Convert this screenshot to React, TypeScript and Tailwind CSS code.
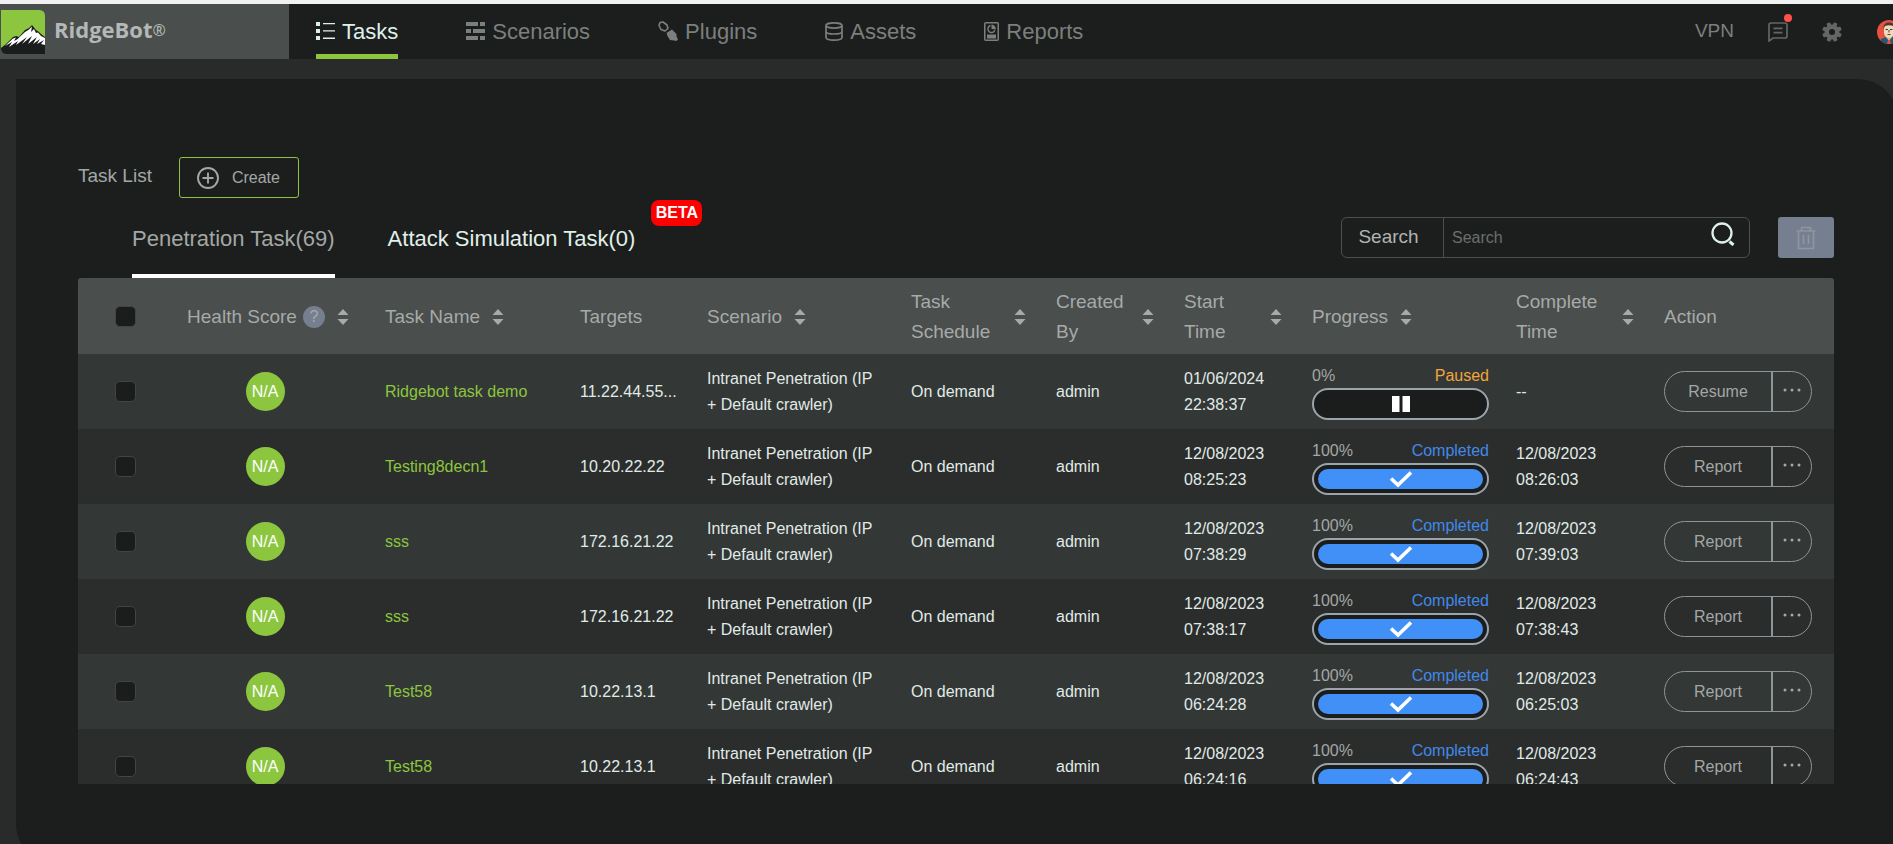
import React from "react";

type Task = {
  name: string;
  target: string;
  start: [string, string];
  end: [string, string] | null;
  paused?: boolean;
};

const tasks: Task[] = [
  { name: "Ridgebot task demo", target: "11.22.44.55...", start: ["01/06/2024", "22:38:37"], end: null, paused: true },
  { name: "Testing8decn1", target: "10.20.22.22", start: ["12/08/2023", "08:25:23"], end: ["12/08/2023", "08:26:03"] },
  { name: "sss", target: "172.16.21.22", start: ["12/08/2023", "07:38:29"], end: ["12/08/2023", "07:39:03"] },
  { name: "sss", target: "172.16.21.22", start: ["12/08/2023", "07:38:17"], end: ["12/08/2023", "07:38:43"] },
  { name: "Test58", target: "10.22.13.1", start: ["12/08/2023", "06:24:28"], end: ["12/08/2023", "06:25:03"] },
  { name: "Test58", target: "10.22.13.1", start: ["12/08/2023", "06:24:16"], end: ["12/08/2023", "06:24:43"] },
];

function Logo() {
  return (
    <svg viewBox="0 0 44 44" className="size-11 shrink-0" aria-hidden="true">
      <path d="M0 0H38Q44 0 44 6V44H5Q0 44 0 39Z" fill="#8cc63f" />
      <path d="M0 38L5 34L12 27L15 26L18 27L24 20L28 18L31 15L35 20L38 22L40 24L44 27V44H5Q0 44 0 39Z" fill="#1b1d1c" />
      <path d="M4 36L12 28.500L15 27.500L13 31L16 29.500L24 22L28 19.500L31 16.500L30 22L33 19L35 23L37 22.500L40 26L44 28V35L40 34L43 30L36 34L39 29L32 34L36 27L27 34L31 26L21 34L26 27L15 35L17 31L8 37L11 32Z" fill="#fff" />
    </svg>
  );
}

function TasksIcon() {
  return (
    <svg viewBox="0 0 19 18" className="h-[18px] w-[19px]" aria-hidden="true">
      <path d="M0 0h4v4H0zM0 7h4v4H0zM0 14h4v4H0zM7 1h12v1.300H7zM7 8.300h12v1.300H7zM7 15.600h12v1.300H7z" fill="currentColor" />
    </svg>
  );
}

function ScenariosIcon() {
  return (
    <svg viewBox="0 0 19 18" className="h-[18px] w-[19px]" aria-hidden="true">
      <path d="M0 0h12v4H0zM14 0h5v4h-5zM0 7h5v4H0zM7 7h12v4H7zM0 14h12v4H0zM14 14h5v4h-5z" fill="currentColor" />
    </svg>
  );
}

function PluginsIcon() {
  return (
    <svg viewBox="0 0 20 20" className="size-5" aria-hidden="true">
      <path d="M2 1.500L5 1L9 4L10 7.500L7 10L3 8.500L1 4.500Z" fill="none" stroke="currentColor" strokeWidth="1.600" strokeLinejoin="round" />
      <path d="M8.500 12L14 8.500L18.500 13V15.500L20 18.500L18.500 20L16 19.500L12 19L9.500 15Z" fill="currentColor" />
    </svg>
  );
}

function AssetsIcon() {
  return (
    <svg viewBox="0 0 18 19" className="h-[19px] w-[18px]" fill="none" stroke="currentColor" strokeWidth="1.700" aria-hidden="true">
      <ellipse cx="9" cy="3.500" rx="8" ry="2.600" />
      <path d="M1 3.500V15.500C1 17 4.500 18.100 9 18.100S17 17 17 15.500V3.500M1 9.500C1 11 4.500 12 9 12S17 11 17 9.500" />
    </svg>
  );
}

function ReportsIcon() {
  return (
    <svg viewBox="0 0 15 19" className="h-[19px] w-[15px]" aria-hidden="true">
      <rect x="0.750" y="0.750" width="13.500" height="17.500" rx="1" fill="none" stroke="currentColor" strokeWidth="1.500" />
      <path d="M6.500 3.500A3.600 3.600 0 1 0 10.900 8.200" fill="none" stroke="currentColor" strokeWidth="1.400" />
      <path d="M7.500 2.500A4.500 4.500 0 0 1 11.800 7.500L7.500 7ZM3 12.500h9V16.500H3z" fill="currentColor" />
    </svg>
  );
}

const navItems = [
  { label: "Tasks", icon: <TasksIcon />, active: true },
  { label: "Scenarios", icon: <ScenariosIcon /> },
  { label: "Plugins", icon: <PluginsIcon /> },
  { label: "Assets", icon: <AssetsIcon /> },
  { label: "Reports", icon: <ReportsIcon /> },
];

function Avatar() {
  return (
    <svg viewBox="0 0 24 24" className="size-6" aria-hidden="true">
      <clipPath id="avatar-clip">
        <circle cx="12" cy="12" r="12" />
      </clipPath>
      <g clipPath="url(#avatar-clip)">
        <rect width="24" height="24" fill="#e8513f" />
        <path d="M2 24L4 19L9 17H15L20 19L22 24Z" fill="#235a70" />
        <path d="M9 17L12 21L15 17V14H9Z" fill="#d9b596" />
        <path d="M11 20h2l1 4h-4z" fill="#e8513f" />
        <path d="M7 7Q7 3 12 3T17 7V13Q16 18 12 18T7 13Z" fill="#efd9bb" />
        <path d="M6.500 9Q6 2.500 12 2.500T17.500 9L16 6Q12 4.500 8 6Z" fill="#4a3a34" />
        <path d="M8.500 9.500h2.500M13 9.500h2.500M10.500 14.500h3M12 10v2.500" stroke="#4a3a34" />
      </g>
    </svg>
  );
}

function Header() {
  return (
    <header className="flex h-[59px] items-stretch border-t-4 border-[#f0f1f0] bg-[#1c1e1d]">
      <div className="flex w-[289px] shrink-0 items-center gap-[9px] bg-[#4a4e4c] pl-px">
        <Logo />
        <span className="flex items-center pb-1 font-['Open_Sans',sans-serif] text-[22px] font-bold text-[#b4b8b6]">
          RidgeBot<span className="font-['Noto_Sans',sans-serif] text-base font-normal">®</span>
        </span>
      </div>
      <nav className="flex gap-[68px] pl-[27px]">
        {navItems.map((item) => (
          <a
            key={item.label}
            href="#"
            className={
              item.active
                ? "flex items-center gap-[7px] border-b-[5px] border-[#8cc63f] pt-1 text-[22px] text-[#dff0ea]"
                : "flex items-center gap-[7px] border-b-[5px] border-transparent pt-1 text-[22px] text-[#7b7f7d]"
            }
          >
            {item.icon}
            {item.label}
          </a>
        ))}
      </nav>
      <div className="-mr-2 ml-auto flex items-center text-[#7b7f7d]">
        <a href="#" className="mr-[34px] text-[19px]">VPN</a>
        <button type="button" aria-label="Messages" className="relative mr-[34px]">
          <svg viewBox="0 0 20 20" className="size-5" fill="none" stroke="#636665" strokeWidth="1.700" aria-hidden="true">
            <path d="M3 1h14q2 0 2 2v11q0 2-2 2H5L1 19V3Q1 1 3 1ZM5.500 6.300h9M5.500 10.700h9" />
          </svg>
          <span className="absolute -right-1 -top-2 size-2 rounded-full bg-[#ff5148]" />
        </button>
        <button type="button" aria-label="Settings" className="mr-[35px]">
          <svg viewBox="0 0 20 20" className="size-5" aria-hidden="true">
            <g fill="#636665">
              <path fillRule="evenodd" d="M10 2.500a7.500 7.500 0 1 0 0 15a7.500 7.500 0 1 0 0-15ZM10 7a3 3 0 1 1 0 6a3 3 0 1 1 0-6Z" />
              {[22, 67, 112, 157, 202, 247, 292, 337].map((angle) => (
                <rect key={angle} x="8" y="0.200" width="4" height="4" rx="1" transform={`rotate(${angle} 10 10)`} />
              ))}
            </g>
          </svg>
        </button>
        <button type="button" aria-label="Account">
          <Avatar />
        </button>
      </div>
    </header>
  );
}

function SortIcon() {
  return (
    <svg viewBox="0 0 12 16" className="h-4 w-3 shrink-0" fill="#a6aaa8" aria-hidden="true">
      <path d="M6 0L11.500 6H.5ZM6 16L.5 10H11.500Z" />
    </svg>
  );
}

function Tick({ label }: { label: string }) {
  return (
    <input
      type="checkbox"
      aria-label={label}
      className="block size-[21px] appearance-none rounded-[5px] border border-[#414443] bg-[#1b1d1c]"
    />
  );
}

function Progress({ paused }: { paused?: boolean }) {
  return (
    <>
      <div className="flex justify-between leading-6">
        <span className="text-[#a3a7a5]">{paused ? "0%" : "100%"}</span>
        <span className={paused ? "text-[#f0a63c]" : "text-[#4189ea]"}>{paused ? "Paused" : "Completed"}</span>
      </div>
      <div className="h-8 rounded-full border-2 border-[#9ba4ab] bg-[#1b1d1c] p-1">
        <div className={paused ? "flex h-full items-center justify-center" : "flex h-full items-center justify-center rounded-full bg-[#4190f7]"}>
          {paused ? (
            <svg viewBox="0 0 18 16" className="h-4 w-[18px]" fill="#fff" aria-hidden="true">
              <path d="M0 0h7.500v16H0zM10.500 0H18v16h-7.500z" />
            </svg>
          ) : (
            <svg viewBox="0 0 24 18" className="h-[18px] w-6" fill="none" stroke="#fff" strokeWidth="3.600" aria-hidden="true">
              <path d="M2 8.500L9 15L22 2.500" />
            </svg>
          )}
        </div>
      </div>
    </>
  );
}

const columns: { label: string; width: string; sort?: boolean; wrap?: boolean }[] = [
  { label: "Task Name", width: "w-[195px]", sort: true },
  { label: "Targets", width: "w-[127px]" },
  { label: "Scenario", width: "w-[204px]", sort: true },
  { label: "Task Schedule", width: "w-[145px]", sort: true, wrap: true },
  { label: "Created By", width: "w-[128px]", sort: true, wrap: true },
  { label: "Start Time", width: "w-[128px]", sort: true, wrap: true },
  { label: "Progress", width: "w-[204px]", sort: true },
  { label: "Complete Time", width: "w-[148px]", sort: true, wrap: true },
  { label: "Action", width: "w-[182px]" },
];

function TaskTable() {
  return (
    <div className="h-[506px] overflow-hidden rounded-t-[3px]">
      <table className="w-full table-fixed text-left text-base text-[#e0ebe7]">
        <thead>
          <tr className="h-[76px] bg-[#4a4e4c] text-[19px] text-[#a6aaa8]">
            <th className="w-[79px] p-0 pl-[37px]">
              <Tick label="Select all tasks" />
            </th>
            <th className="w-[216px] p-0 pl-1.5 pt-0.5 font-normal">
              <div className="flex items-center justify-center">
                Health Score
                <span className="ml-1.5 flex size-[22px] items-center justify-center rounded-full bg-[#757f8f] text-base">?</span>
                <span className="ml-3"><SortIcon /></span>
              </div>
            </th>
            {columns.map((col) => (
              <th key={col.label} className={`${col.width} pb-0 pl-3 pr-[18px] pt-0.5 font-normal`}>
                <div className={col.wrap ? "flex items-center justify-between leading-[30px]" : "flex items-center gap-3"}>
                  <span className={col.wrap ? "w-min" : "whitespace-nowrap"}>{col.label}</span>
                  {col.sort && <SortIcon />}
                </div>
              </th>
            ))}
          </tr>
        </thead>
        <tbody>
          {tasks.map((task, i) => (
            <tr key={i} className="h-[75px] odd:bg-[#333736] even:bg-[#2b2d2c]">
              <td className="p-0 pl-[37px]">
                <Tick label={`Select ${task.name}`} />
              </td>
              <td className="p-0">
                <span className="mx-auto flex size-[39px] items-center justify-center rounded-full bg-[#8cc63f] text-white">N/A</span>
              </td>
              <td className="px-3 py-0">
                <a href="#" className="text-[#8cc63f]">{task.name}</a>
              </td>
              <td className="whitespace-nowrap px-3 py-0">{task.target}</td>
              <td className="py-0 pl-3 pr-5 leading-[26px]">Intranet Penetration (IP + Default crawler)</td>
              <td className="px-3 py-0">On demand</td>
              <td className="px-3 py-0">admin</td>
              <td className="px-3 py-0 leading-[26px]">{task.start[0]} {task.start[1]}</td>
              <td className="py-0 pl-3 pr-[15px]">
                <Progress paused={task.paused} />
              </td>
              <td className="px-3 py-0 leading-[26px]">{task.end ? `${task.end[0]} ${task.end[1]}` : "--"}</td>
              <td className="px-3 py-0">
                <div className="flex h-[41px] w-[148px] items-stretch rounded-full border border-[#8d9599] text-[#a3a7a5]">
                  <button type="button" className="flex-1">{task.paused ? "Resume" : "Report"}</button>
                  <button type="button" aria-label="More actions" className="flex w-10 justify-center border-l-2 border-[#8d9599] pt-4">
                    <svg viewBox="0 0 18 4" className="h-1 w-[18px]" fill="currentColor" aria-hidden="true">
                      <circle cx="2" cy="2" r="1.500" />
                      <circle cx="9" cy="2" r="1.500" />
                      <circle cx="16" cy="2" r="1.500" />
                    </svg>
                  </button>
                </div>
              </td>
            </tr>
          ))}
        </tbody>
      </table>
    </div>
  );
}

export default function App() {
  return (
    <div className="h-screen overflow-hidden bg-[#292b2a] font-['Liberation_Sans',Arial,sans-serif]">
      <Header />
      <main className="-mr-[5px] ml-4 mt-5 rounded-bl-[40px] rounded-tr-[40px] bg-[#1c1e1d] pb-20 pl-[62px] pr-16 pt-[78px]">
        <div className="flex items-center gap-[27px]">
          <h1 className="pb-0.5 text-[19px] text-[#a3a7a5]">Task List</h1>
          <button type="button" className="flex h-[41px] w-[120px] items-center rounded-[3px] border border-[#8cc63f] pl-4 text-base text-[#a3a7a5]">
            <svg viewBox="0 0 24 24" className="mr-3 size-6" fill="none" stroke="currentColor" strokeWidth="1.900" aria-hidden="true">
              <circle cx="12" cy="12" r="10" />
              <path d="M12 6.500v11M6.500 12h11" />
            </svg>
            Create
          </button>
        </div>
        <div className="flex items-end justify-between">
          <div className="flex gap-[53px] pl-[54px] text-[22px]">
            <button type="button" className="h-20 border-b-4 border-white pt-1 text-[#a3a7a5]">Penetration Task(69)</button>
            <button type="button" className="relative h-20 border-b-4 border-transparent pt-1 text-[#e0f0ea]">
              Attack Simulation Task(0)
              <span className="absolute left-full top-0.5 ml-4 flex h-[26px] w-[51px] items-center justify-center rounded-lg bg-[#fe0000] text-base font-bold text-white">
                BETA
              </span>
            </button>
          </div>
          <div className="mb-5 flex items-center gap-7">
            <div className="flex h-[41px] w-[409px] items-stretch rounded-md border border-[#4b4e4d]">
              <label htmlFor="task-search" className="flex w-[102px] items-center justify-center border-r border-[#4b4e4d] pr-2 text-[19px] text-[#b0b4b2]">
                Search
              </label>
              <input
                id="task-search"
                type="text"
                placeholder="Search"
                className="min-w-0 flex-1 bg-transparent px-2 text-base text-[#e0ebe7] outline-none placeholder:text-[#6b6f6d]"
              />
              <button type="button" aria-label="Run search" className="pb-2 pr-3.5">
                <svg viewBox="0 0 24 24" className="size-6" fill="none" stroke="#dff0ea" strokeWidth="2.300" aria-hidden="true">
                  <circle cx="11" cy="11" r="9.500" />
                  <path d="M18.500 19.500L22.500 23" strokeWidth="3" />
                </svg>
              </button>
            </div>
            <button type="button" aria-label="Delete" className="flex h-[41px] w-14 items-center justify-center rounded-[3px] bg-[#757f8f]">
              <svg viewBox="0 0 20 24" className="h-6 w-5" fill="none" stroke="#8f969f" strokeWidth="1.700" aria-hidden="true">
                <path d="M.5 5H19.500M5.500 4.500V1.500H14.500V4.500M2.500 5V22.500H17.500V5M7.500 9V18M12.500 9V18" />
              </svg>
            </button>
          </div>
        </div>
        <TaskTable />
      </main>
    </div>
  );
}
